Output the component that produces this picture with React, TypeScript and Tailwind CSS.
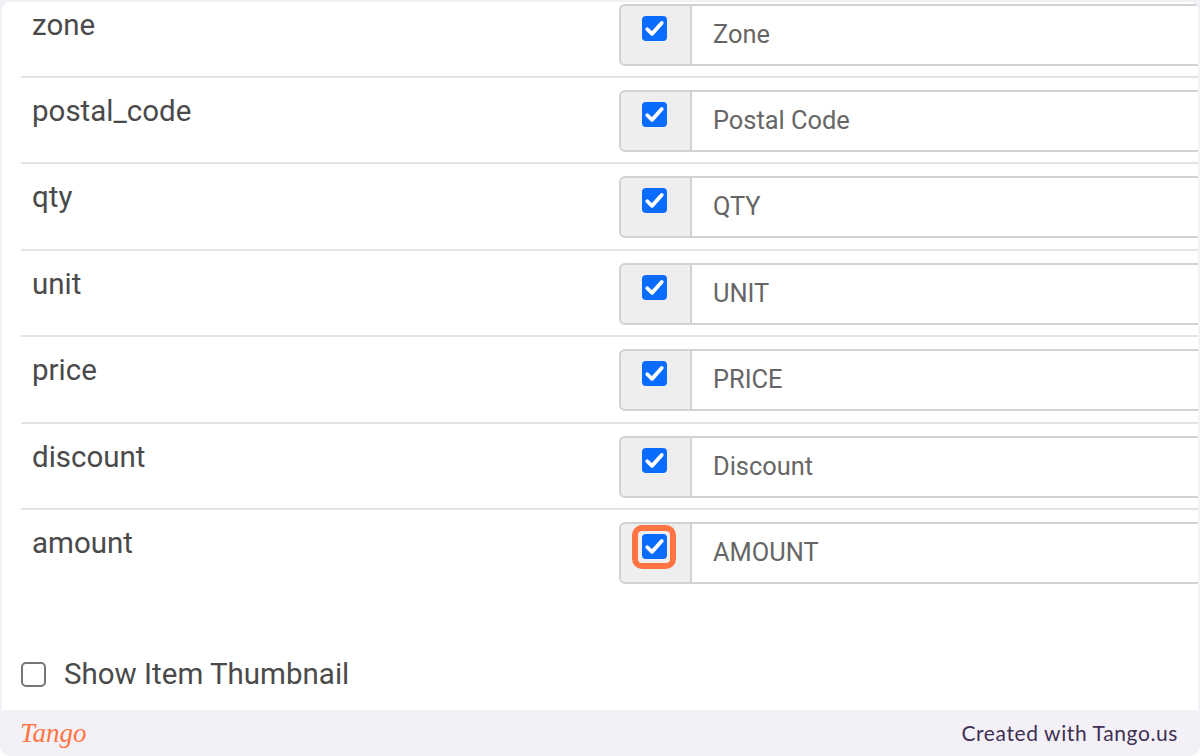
const fields = [
  { name: 'zone', label: 'Zone' },
  { name: 'postal_code', label: 'Postal Code' },
  { name: 'qty', label: 'QTY' },
  { name: 'unit', label: 'UNIT' },
  { name: 'price', label: 'PRICE' },
  { name: 'discount', label: 'Discount' },
  { name: 'amount', label: 'AMOUNT', highlight: true },
];

function CheckBox() {
  return (
    <span className="flex h-[25px] w-[25px] items-center justify-center rounded-[4px] bg-[#0a6cff]">
      <svg viewBox="0 0 20 20" className="h-[25px] w-[25px]" fill="none">
        <path d="M4.2 10.6l3.8 3.7L15.8 5.6" stroke="#fff" strokeWidth="3" strokeLinecap="round" strokeLinejoin="round" />
      </svg>
    </span>
  );
}

function FieldRow({ name, label, highlight, first, last }: { name: string; label: string; highlight?: boolean; first: boolean; last: boolean }) {
  return (
    <div className={`flex ${last ? '' : 'border-b-2 border-[#e4e4e4]'} ${first ? 'h-[76px] pt-[2px]' : 'h-[86.4px] pt-[12px]'}`}>
      <div className="w-[598px] pl-[11px] pt-[1px] text-[29.5px] leading-[40px] text-[#4a4a4a]">{name}</div>
      <div className="flex h-[62px] flex-1">
        <div className="relative flex w-[73px] justify-center rounded-l-[6px] border-2 border-[#d2d2d2] bg-[#eeeeee] pr-[3px] pt-[10px]">
          <CheckBox />
          {highlight && (
            <span className="absolute left-[11px] top-[1px] h-[44px] w-[44px] rounded-[10px] border-[6px] border-[#ff7442]" />
          )}
        </div>
        <div className="flex flex-1 items-center border-y-2 border-[#d2d2d2] bg-white pb-[2px] pl-[21px] text-[25.4px] text-[#666666]">
          {label}
        </div>
      </div>
    </div>
  );
}

export default function App() {
  return (
    <div className="h-[756px] w-[1200px] overflow-hidden bg-white font-['Roboto',sans-serif]">
      <div className="flex h-full flex-col rounded-b-[10px] bg-[#f3f1f7]">
        <div className="flex-1 px-[2px] pt-[2px]">
          <div className="h-full overflow-hidden rounded-t-[8px] bg-white pl-[19px]">
            {fields.map((f, i) => (
              <FieldRow
                key={f.name}
                name={f.name}
                label={f.label}
                highlight={f.highlight}
                first={i === 0}
                last={i === fields.length - 1}
              />
            ))}
            <div className="mt-[58px] flex items-center gap-[18px] text-[29.5px] leading-[40px] text-[#4a4a4a]">
              <span className="h-[25px] w-[25px] rounded-[5px] border-2 border-[#767676] bg-white" />
              Show Item Thumbnail
            </div>
          </div>
        </div>
        <div className="flex h-[46px] items-center justify-between pl-[20px] pr-[22px]">
          <span className="font-['Liberation_Serif',serif] text-[27px] italic leading-none text-[#ff7442]">Tango</span>
          <span className="font-['Lato',sans-serif] text-[21px] tracking-[0.6px] text-[#3f3054]">Created with Tango.us</span>
        </div>
      </div>
    </div>
  );
}
